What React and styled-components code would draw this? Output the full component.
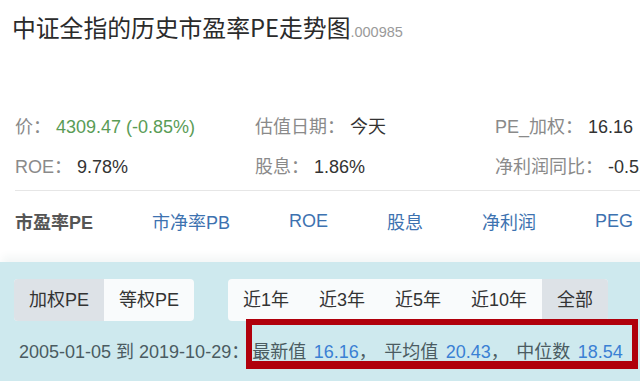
import React from 'react';
import styled, { createGlobalStyle } from 'styled-components';

const GlobalStyle = createGlobalStyle`
  html, body {
    margin: 0;
    padding: 0;
    background: #ffffff;
  }
  body {
    font-family: 'Liberation Sans', 'Noto Sans CJK SC', sans-serif;
    width: 640px;
    height: 381px;
    overflow: hidden;
  }
`;

const Page = styled.div`
  position: relative;
  width: 760px;
  height: 381px;
`;

const Header = styled.div`
  padding: 9px 12px 0;
  height: 107px;
  box-sizing: border-box;
`;

const Title = styled.h1`
  margin: 0;
  font-weight: normal;
  font-size: 23.8px;
  line-height: 36px;
  color: #2b2b2b;
  font-family: 'Noto Sans CJK SC', sans-serif;
`;

const Code = styled.span`
  font-family: 'Liberation Sans', sans-serif;
  font-size: 14.5px;
  color: #9a9a9a;
`;

const InfoGrid = styled.div`
  display: grid;
  grid-template-columns: 240px 240px 240px;
  padding: 0 15px;
`;

const InfoItem = styled.div`
  height: 40px;
  line-height: 40px;
  font-size: 18px;
  white-space: nowrap;
`;

const Label = styled.span`
  color: #8a8a8a;
`;

const Value = styled.span`
  color: ${p => (p.$green ? '#5a9c56' : '#333')};
`;

const Divider = styled.div`
  margin: 3px 0 0 15px;
  height: 1px;
  background: #e6e6e6;
`;

const Tabs = styled.div`
  display: flex;
  gap: 59px;
  padding: 0 15px;
  height: 60px;
  align-items: center;
  font-size: 18px;
`;

const Tab = styled.span`
  white-space: nowrap;
  color: ${p => (p.$active ? '#555' : '#3d72b0')};
  font-weight: ${p => (p.$active ? 'bold' : 'normal')};
`;

const Band = styled.div`
  margin-top: 11px;
  background: #cee9ee;
  box-shadow: 0 -8px 8px -2px #f4f7f7;
  padding: 17px 14px 0;
  height: 130px;
  box-sizing: border-box;
`;

const Controls = styled.div`
  display: flex;
  gap: 34px;
`;

const Group = styled.div`
  display: flex;
  border-radius: 4px;
  overflow: hidden;
  background: #f9fbfc;
`;

const Btn = styled.div`
  height: 42px;
  line-height: 42px;
  padding: 0 15px;
  font-size: 18px;
  color: #333;
  white-space: nowrap;
  background: ${p => (p.$active ? '#dde2e7' : 'transparent')};
`;

const Summary = styled.div`
  margin-top: 16px;
  padding-left: 5px;
  font-size: 18px;
  line-height: 30px;
  color: #4a5b61;
  white-space: nowrap;
`;

const Stats = styled.span`
  word-spacing: 2.5px;
  margin-left: 3px;
`;

const Num = styled.span`
  color: #3a80d4;
`;

const Highlight = styled.div`
  position: absolute;
  left: 246px;
  top: 319px;
  width: 392px;
  height: 50px;
  box-sizing: border-box;
  border: 6px solid #b0000c;
  border-bottom-width: 8px;
  pointer-events: none;
`;

const info = [
  { label: '价： ', value: '4309.47 (-0.85%)', green: true },
  { label: '估值日期： ', value: '今天' },
  { label: 'PE_加权： ', value: '16.16' },
  { label: 'ROE： ', value: '9.78%' },
  { label: '股息： ', value: '1.86%' },
  { label: '净利润同比： ', value: '-0.51%' },
];

const tabs = ['市盈率PE', '市净率PB', 'ROE', '股息', '净利润', 'PEG'];
const ranges = ['近1年', '近3年', '近5年', '近10年', '全部'];

export default function App() {
  return (
    <>
      <GlobalStyle />
      <Page>
        <Header>
          <Title>
            中证全指的历史市盈率PE走势图<Code>.000985</Code>
          </Title>
        </Header>
        <InfoGrid>
          {info.map(item => (
            <InfoItem key={item.label}>
              <Label>{item.label}</Label>
              <Value $green={item.green}>{item.value}</Value>
            </InfoItem>
          ))}
        </InfoGrid>
        <Divider />
        <Tabs>
          {tabs.map((t, i) => (
            <Tab key={t} $active={i === 0}>
              {t}
            </Tab>
          ))}
        </Tabs>
        <Band>
          <Controls>
            <Group>
              <Btn $active>加权PE</Btn>
              <Btn>等权PE</Btn>
            </Group>
            <Group>
              {ranges.map(r => (
                <Btn key={r} $active={r === '全部'}>
                  {r}
                </Btn>
              ))}
            </Group>
          </Controls>
          <Summary>
            2005-01-05 到 2019-10-29：
            <Stats>
              最新值 <Num>16.16</Num>， 平均值 <Num>20.43</Num>， 中位数{' '}
              <Num>18.54</Num>
            </Stats>
          </Summary>
        </Band>
        <Highlight />
      </Page>
    </>
  );
}
